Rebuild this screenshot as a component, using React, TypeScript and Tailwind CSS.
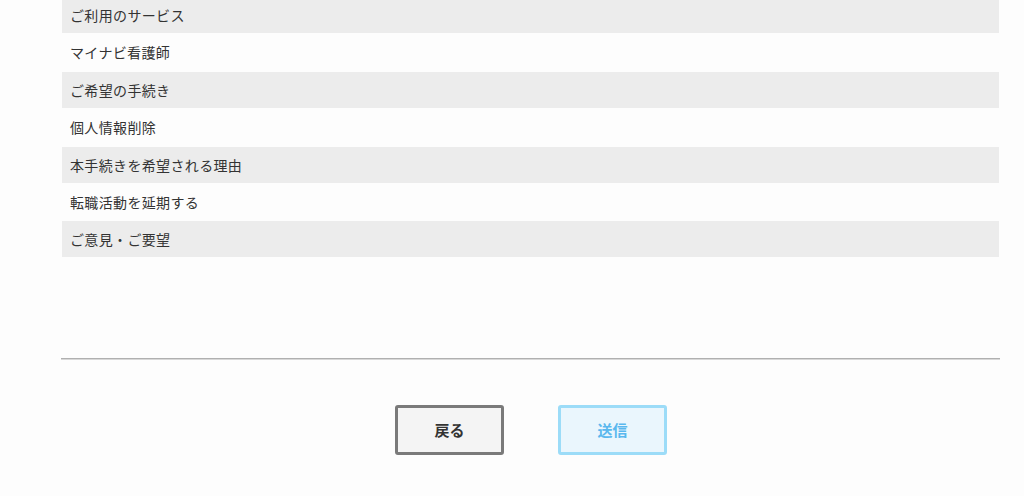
import React from "react";

const rows: { label: string; gray: boolean; h: string }[] = [
  { label: "ご利用のサービス", gray: true, h: "h-[36px]" },
  { label: "マイナビ看護師", gray: false, h: "h-[39px]" },
  { label: "ご希望の手続き", gray: true, h: "h-[36px]" },
  { label: "個人情報削除", gray: false, h: "h-[39px]" },
  { label: "本手続きを希望される理由", gray: true, h: "h-[36px]" },
  { label: "転職活動を延期する", gray: false, h: "h-[38px]" },
  { label: "ご意見・ご要望", gray: true, h: "h-[36px]" },
];

export default function App() {
  return (
    <div
      className="w-[1024px] h-[496px] overflow-hidden bg-[#fdfdfd] text-[#333]"
      style={{ fontFamily: '"Noto Sans CJK JP", "Noto Sans", sans-serif' }}
    >
      <div className="ml-[61px] w-[939px] -mt-[3px]">
        <div className="px-[1px]">
          {rows.map((r) => (
            <div
              key={r.label}
              className={`${r.h} flex items-center pl-[8px] text-[14px] tracking-[0.35px] ${
                r.gray ? "bg-[#ececec]" : ""
              }`}
            >
              {r.label}
            </div>
          ))}
        </div>
        <div className="mt-[101px] h-[2px] bg-[#b0b0b0] border-b border-[#d8d8d8]" />
        <div className="flex justify-center gap-[54px] mt-[45px] pl-[1px]">
          <button className="w-[109px] h-[50px] rounded-[3px] border-[3px] border-[#7a7a7a] bg-[#f4f4f4] text-[15px] font-bold text-[#333]">
            戻る
          </button>
          <button className="w-[109px] h-[50px] rounded-[3px] border-[3px] border-[#9cdcf8] bg-[#eaf6fd] text-[15px] font-bold text-[#5ab8ee]">
            送信
          </button>
        </div>
      </div>
    </div>
  );
}
